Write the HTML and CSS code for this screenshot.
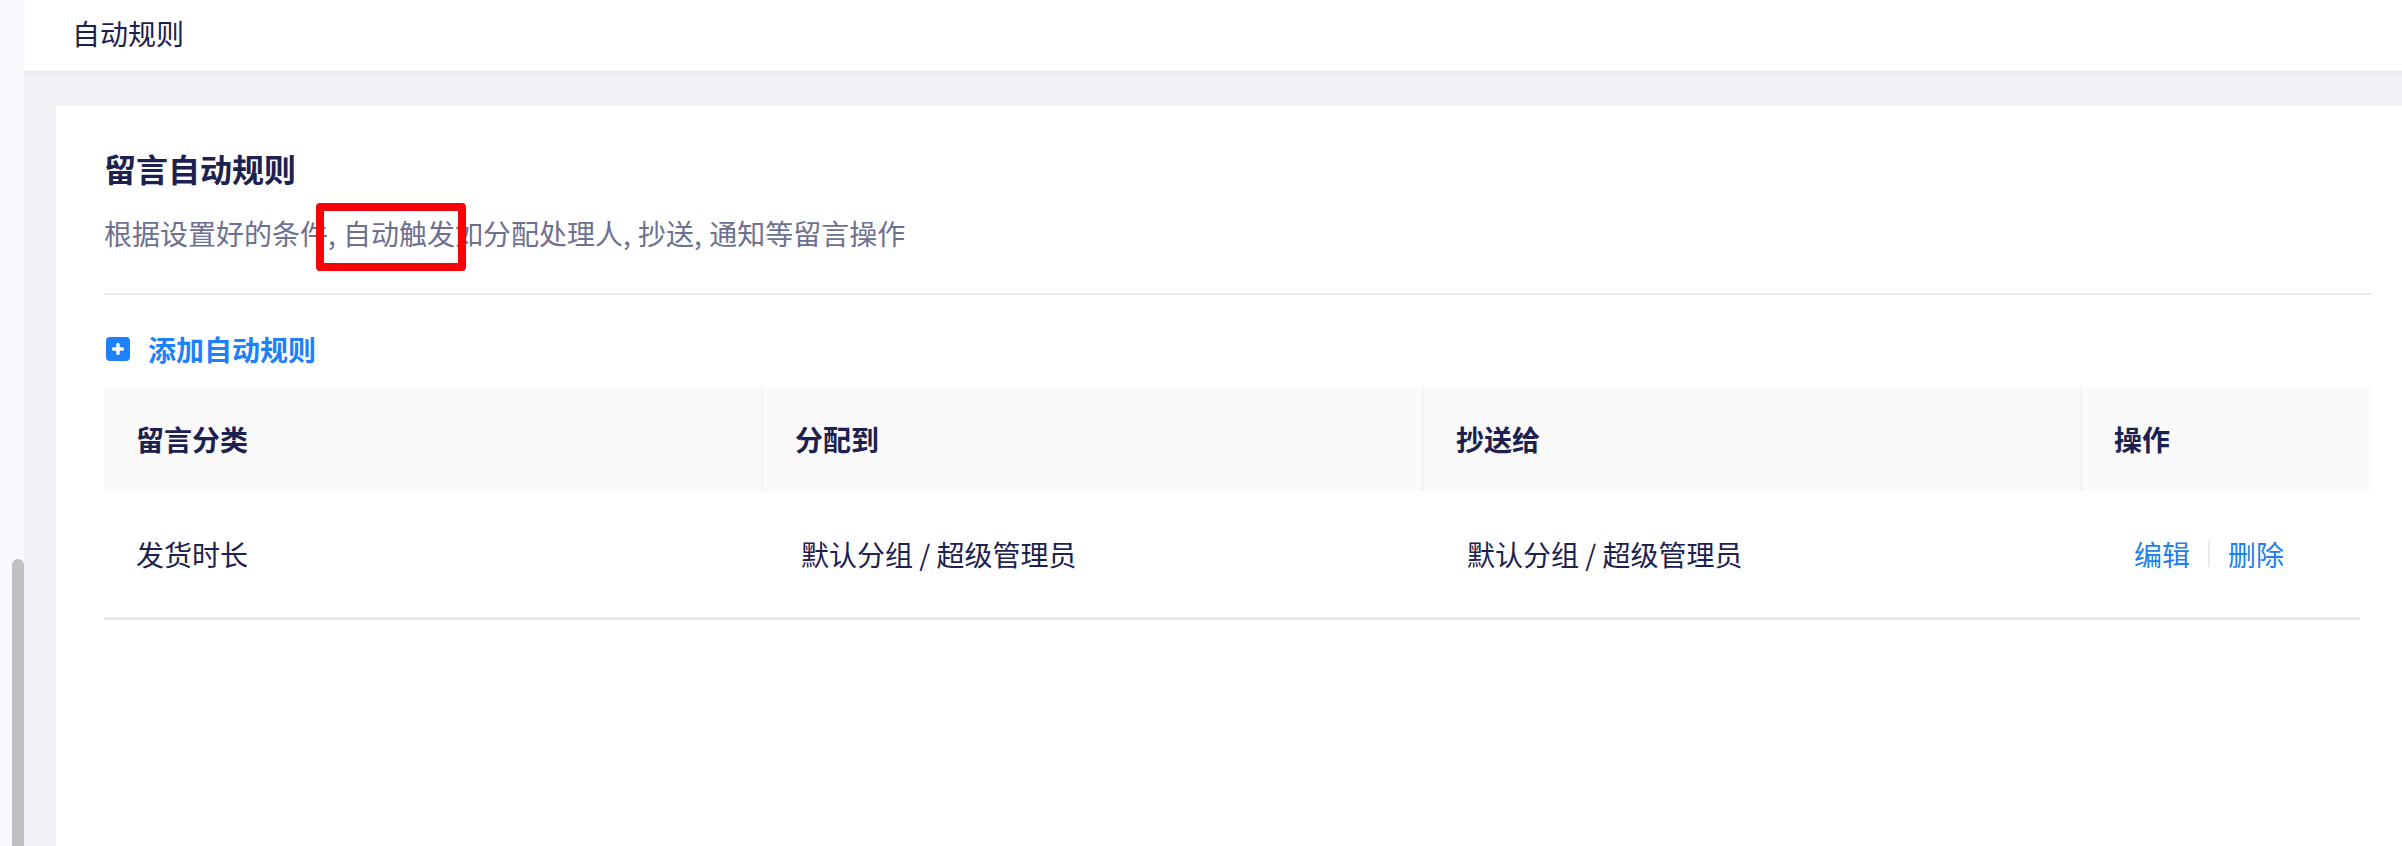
FILE: index.html
```
<!DOCTYPE html>
<html lang="zh-CN">
<head>
<meta charset="utf-8">
<title>自动规则</title>
<link rel="stylesheet" href="styles.css">
</head>
<body>
<div class="page">
  <aside class="rail"><div class="thumb"></div></aside>
  <main class="main">
    <header class="topbar">自动规则</header>
    <div class="content">
      <section class="card">
        <h1 class="title">留言自动规则</h1>
        <p class="desc">根据设置好的条件, 自动触发如分配处理人, 抄送, 通知等留言操作<span class="mark"></span></p>
        <div class="rule"></div>
        <a class="add">
          <svg class="add-icon" viewBox="0 0 24 24"><rect width="24" height="24" rx="4" fill="#1e80fb"/><path d="M12 7.5v9M7.5 12h9" stroke="#fff" stroke-width="3.4" stroke-linecap="round"/></svg>
          <span>添加自动规则</span>
        </a>
        <div class="thead">
          <div class="th">留言分类</div>
          <div class="th">分配到</div>
          <div class="th">抄送给</div>
          <div class="th">操作</div>
        </div>
        <div class="trow">
          <div class="td">发货时长</div>
          <div class="td">默认分组 / 超级管理员</div>
          <div class="td">默认分组 / 超级管理员</div>
          <div class="td actions"><a>编辑</a><i class="sep"></i><a>删除</a></div>
        </div>
      </section>
    </div>
  </main>
</div>
</body>
</html>
```
FILE: styles.css
```
* { box-sizing: border-box; }
html, body { margin: 0; height: 100%; overflow: hidden; }
body {
  font-family: "Noto Sans CJK SC", "Noto Sans", sans-serif;
  color: #1c2150;
  background: #f0f1f6;
}
.page { display: flex; height: 846px; }
.rail { position: relative; width: 24px; flex: none; background: #f8f9fc; }
.thumb {
  position: absolute; left: 12px; right: 0; top: 559px; bottom: 0;
  background: #c1c1c3; border-radius: 6px 6px 0 0;
}
.main { flex: 1; min-width: 0; display: flex; flex-direction: column; }
.topbar {
  height: 73px; flex: none; display: flex; align-items: center;
  padding: 0 0 6px 48px; background: #fff; border-bottom: 2px solid #e9eaef;
  font-size: 28px; line-height: 40px;
}
.content { flex: 1; min-height: 0; padding: 33px 0 0 32px; }
.card { height: 100%; background: #fff; padding: 40px 30px 0 48px; }
.title { margin: 0; font-size: 32px; line-height: 44px; font-weight: 600; }
.desc {
  position: relative; margin: 23px 0 0; font-size: 28px; line-height: 40px; color: #6d7090;
  word-spacing: 1px;
}
.mark {
  position: absolute; left: 212px; top: -10px; width: 150px; height: 68px;
  border: 8px solid #fb0007; border-radius: 4px;
}
.rule { height: 2px; margin-top: 40px; background: #ececf0; }
.add {
  display: flex; align-items: center; gap: 18px; margin-top: 34px; padding-left: 2px;
  font-size: 28px; line-height: 40px; font-weight: 600; color: #1e80fb;
}
.add-icon { width: 24px; height: 24px; flex: none; }
.thead {
  display: grid; grid-template-columns: 657px 661px 658px 292px;
  height: 104px; margin-top: 18px; background: #fafafb;
}
.th {
  display: flex; align-items: center; padding-left: 32px;
  border-left: 2px solid #f1f2f5; font-size: 28px; font-weight: 600;
}
.th:first-child { border-left: 0; }
.trow {
  display: grid; grid-template-columns: 665px 666px 666px 1fr;
  height: 129px; margin-right: 12px; border-bottom: 3px solid #e9e9ec;
}
.td { display: flex; align-items: center; padding-left: 32px; font-size: 28px; }
.actions { padding-left: 33px; color: #1e80e8; }
.sep { width: 2px; height: 26px; margin: 0 18px; background: #e9eaef; }
```
